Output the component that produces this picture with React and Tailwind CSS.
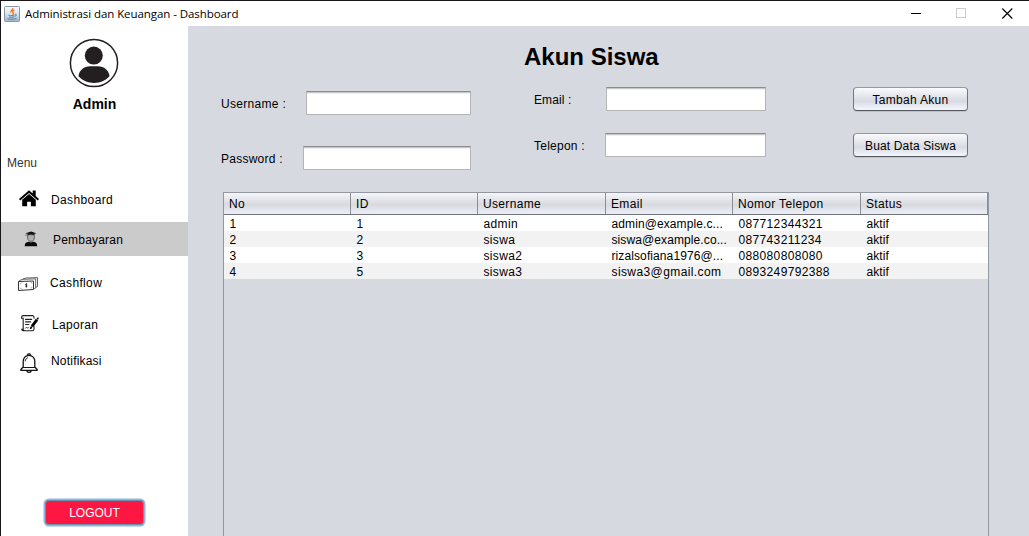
const COLUMNS = ['No', 'ID', 'Username', 'Email', 'Nomor Telepon', 'Status'];

const ROWS = [
  ['1', '1', 'admin', 'admin@example.c...', '087712344321', 'aktif'],
  ['2', '2', 'siswa', 'siswa@example.co...', '087743211234', 'aktif'],
  ['3', '3', 'siswa2', 'rizalsofiana1976@...', '088080808080', 'aktif'],
  ['4', '5', 'siswa3', 'siswa3@gmail.com', '0893249792388', 'aktif'],
];

function JavaIcon() {
  return (
    <svg width="16" height="16" viewBox="0 0 16 16" fill="none">
      <defs>
        <linearGradient id="java-bg" x1="0" y1="0" x2="0" y2="1">
          <stop offset="0" stopColor="#fafbfc" />
          <stop offset="0.55" stopColor="#d5e0ea" />
          <stop offset="1" stopColor="#9cb4c8" />
        </linearGradient>
      </defs>
      <rect x="0.5" y="0.5" width="15" height="15" rx="1" fill="url(#java-bg)" stroke="#8796a5" />
      <path d="M8.800 2c.8 1.600-2.800 2.600-1.800 4.600M10.300 4c-1.600.8-2 1.500-1.300 2.500s.3 1.500-.5 2" stroke="#e8802c" strokeWidth="1.400" />
      <path d="M4.500 9c-.8.700 4.500.8 6 0M5.200 10.800c0 .6 4 .6 5 0M11 8.300c2-.4 1.800 1.500-.2 2" stroke="#45749c" strokeWidth="0.900" />
      <path d="M3.700 12.200c-.6.800 1.800 1 4.300 1s5-.5 4-1.300" stroke="#45749c" strokeWidth="0.900" />
    </svg>
  );
}

function Avatar() {
  return (
    <svg width="50" height="50" viewBox="0 0 50 50">
      <circle cx="25" cy="25" r="23.600" fill="#fff" stroke="#231f20" strokeWidth="1.500" />
      <circle cx="24.800" cy="17.600" r="9" fill="#231f20" />
      <path d="M9.500 38.300C10.200 32 15 28.200 21 28.200h8c6 0 10.800 3.800 11.500 10.100C36.500 42.800 31 45 25 45s-11.500-2.200-15.500-6.700z" fill="#231f20" />
    </svg>
  );
}

function HouseIcon() {
  return (
    <svg width="20" height="17" viewBox="0 0 20 17" fill="#000">
      <path d="M10 .3 0 9l1.200 1.500L10 3l8.800 7.500L20 9l-3.300-2.900V.5h-3v3z" />
      <path d="M10 3.900 3.200 9.800v6.500h4.900v-4.500h3.800v4.500h4.900V9.800z" />
    </svg>
  );
}

function GraduateIcon() {
  return (
    <svg width="14" height="16" viewBox="0 0 14 16">
      <path d="M7 .6 1.500 2.200 7 3.600l5.500-1.400z" fill="#111" />
      <path d="M3.300 2.500v2.200c2.200-.6 5.200-.6 7.400 0V2.500L7 3.500z" fill="#222" />
      <path d="M3.700 4.900v2.200c0 2 1.500 3.300 3.300 3.300s3.300-1.300 3.300-3.300V4.900" fill="#b0b0b0" stroke="#555" strokeWidth="0.900" />
      <path d="M2.100 2.300v3" stroke="#444" strokeWidth="0.600" />
      <path d="M.8 15.300c0-3.200 1.200-4 4-4.600L7 11.500l2.200-.8c2.800.6 4 1.400 4 4.600z" fill="#0a0a0a" />
    </svg>
  );
}

function CashIcon() {
  return (
    <svg width="20" height="15" viewBox="0 0 20 15" fill="none" stroke="#333" strokeWidth="1">
      <path d="M.5 4.500 15.500 4v8.500L.5 13.500z" />
      <path d="M1.200 3.600 5 2.300l12.700-.5v9.200l-2 1M5 1.900 8 1l11.500-.4v8.900l-1.800.9" stroke="#555" strokeWidth="0.900" />
      <path d="M2.300 7.300V6l1.500-.1M2.300 10.600v1.300l1.500-.1M13.900 6.600V5.500l-1.400.1M13.900 9.800v1.100l-1.400.1" stroke="#999" strokeWidth="0.700" />
      <path d="M9.200 7.300c-.4-.5-1.700-.4-1.700.3 0 .9 1.700.5 1.700 1.400 0 .8-1.300.9-1.800.3M8.400 6.500v4" stroke="#222" strokeWidth="0.900" />
    </svg>
  );
}

function ReportIcon() {
  return (
    <svg width="18" height="17" viewBox="0 0 18 17" fill="none" stroke="#222" strokeLinecap="round">
      <path d="M13 3.300V2.200c0-1-.6-1.600-1.600-1.600H2.200C1 .6.600 1.300.600 2.300v.9h1.600v10.900c0 1.200.6 1.700 1.600 1.700h7.600c1 0 1.600-.6 1.600-1.600v-2.700M3.800 15.800c-2 0-3.100-.1-3.100-1.600h1.500" strokeWidth="1.100" />
      <path d="M4.600 4.400h6M4.600 6.900h5M4.600 9.500h3.200" strokeWidth="1.200" />
      <path d="m4.500 13.200 1-1 .8.900 1.200-.4" strokeWidth="0.800" />
      <path d="m16 4.600-5 6.800" stroke="#000" strokeWidth="2.900" strokeLinecap="butt" />
      <path d="m16.800 3.400-.1.200M10.300 12.200l-.5.900" stroke="#000" strokeWidth="1.800" />
    </svg>
  );
}

function BellIcon() {
  return (
    <svg width="18" height="20" viewBox="0 0 18 20" fill="none" stroke="#151515" strokeWidth="1.300">
      <path d="M3.200 14V8.500C3.200 5 5.500 2.400 9 2.400s5.800 2.600 5.800 6.100V14l2.300 2.500c.3.500.1.900-.4.900H1.300c-.5 0-.7-.4-.4-.9z" />
      <path d="M3 14.500h12" strokeWidth="1" />
      <path d="M7.600 2.300V1.600C7.800.5 10.200.5 10.400 1.600v.7M6.700 17.600c.3 2.300 4.300 2.300 4.600 0" />
      <path d="M5.200 8.400c.1-2 1.200-3.300 2.700-3.800" strokeWidth="0.900" />
    </svg>
  );
}

function Field({ label, labelClass, inputClass }) {
  return (
    <label className="flex h-6 items-center justify-between">
      <span className={`pt-0.5 leading-4 whitespace-nowrap ${labelClass}`}>{label}</span>
      <input
        className={`h-6 border border-[#b5b5b8] border-t-[#8b8c91] bg-white shadow-[inset_0_1px_0_#c8c8cb,inset_0_2px_0_#f0f0f1] outline-none ${inputClass}`}
      />
    </label>
  );
}

function ActionButton({ children, textClass }) {
  return (
    <button className="h-6 w-[115px] rounded-[4px] border border-[#73767d] border-t-[#95989f] border-b-[#54575e] bg-linear-to-b from-[#fafafc] via-[#d7dae2] via-60% to-[#f5f7ff] pt-px leading-4 shadow-[0_1px_0_#bfc3cb]">
      <span className={textClass}>{children}</span>
    </button>
  );
}

function MenuItem({ icon, label, className, iconClass, textClass }) {
  return (
    <div className={`flex items-start ${className}`}>
      <span className={`shrink-0 ${iconClass}`}>{icon}</span>
      <span className={`leading-4 ${textClass}`}>{label}</span>
    </div>
  );
}

function Sidebar() {
  return (
    <aside className="flex w-[187px] shrink-0 flex-col bg-white">
      <div className="flex flex-col items-center pt-3">
        <span className="mr-[2px]">
          <Avatar />
        </span>
        <span className="mt-[7px] text-sm leading-[18px] font-bold">Admin</span>
      </div>
      <div className="mt-[42px] pl-1.5 leading-4 text-[#333]">Menu</div>
      <nav className="flex flex-col">
        <MenuItem icon={<HouseIcon />} label="Dashboard" className="mt-[11px] h-10 pt-2 pl-[18px]" iconClass="w-8" textClass="pt-0.5 tracking-[0.38px]" />
        <MenuItem icon={<GraduateIcon />} label="Pembayaran" className="h-[34px] bg-[#cbcbcb] pt-[9px] pl-[23px]" iconClass="w-[29px]" textClass="pt-px tracking-[0.2px]" />
        <MenuItem icon={<CashIcon />} label="Cashflow" className="h-[42px] pt-[19px] pl-[17px]" iconClass="mt-0.5 w-8" textClass="tracking-[0.35px]" />
        <MenuItem icon={<ReportIcon />} label="Laporan" className="h-10 pt-[17px] pl-5" iconClass="w-[31px]" textClass="pt-0.5 tracking-[0.3px]" />
        <MenuItem icon={<BellIcon />} label="Notifikasi" className="h-10 pt-[15px] pl-[19px]" iconClass="w-[31px]" textClass="tracking-[0.2px]" />
      </nav>
      <button className="mt-auto mb-[12px] ml-[45px] h-[23px] w-[97px] rounded-[3px] bg-[#ff1744] pt-px leading-4 text-white shadow-[0_0_0_1px_#6f8fae,0_0_0_2.500px_#8cb8dc]">
        LOGOUT
      </button>
    </aside>
  );
}

function cellTracking(column, text) {
  if (column === 5) return 'tracking-[0.1px]';
  if (column === 3) return text.endsWith('...') ? 'tracking-[0.1px]' : 'tracking-[0.4px]';
  return 'tracking-[0.35px]';
}

function AccountTable() {
  return (
    <div className="mt-[22px] ml-[35px] flex w-[766px] grow flex-col border-x border-t border-[#9297a1]">
      <div className="grid h-[22px] shrink-0 grid-cols-[127px_127px_128px_127px_128px_127px] border-b border-[#6f737b] bg-linear-to-b from-[#f5f6f9] via-[#d8dae0] via-55% to-[#eceff7]">
        {COLUMNS.map((name) => (
          <div key={name} className="border-r border-[#8b8e96] pt-[3px] pl-[5px] leading-4 tracking-[0.33px]">
            {name}
          </div>
        ))}
      </div>
      {ROWS.map((row, i) => (
        <div key={row[0]} className={`grid h-4 grid-cols-[127px_127px_128px_127px_128px_127px] ${i % 2 ? 'bg-[#f2f2f2]' : 'bg-white'}`}>
          {row.map((cell, j) => (
            <div key={COLUMNS[j]} className={`overflow-hidden pt-px pl-[5.5px] leading-4 whitespace-nowrap ${cellTracking(j, cell)}`}>
              {cell}
            </div>
          ))}
        </div>
      ))}
    </div>
  );
}

export default function App() {
  return (
    <div className="flex h-[536px] w-[1029px] flex-col overflow-hidden border-t border-l border-[#19151a] bg-[#d6d9e0] font-['Liberation_Sans',Arial,sans-serif] text-xs text-black">
      <header className="flex h-[25px] shrink-0 items-center bg-white">
        <span className="ml-[3px]">
          <JavaIcon />
        </span>
        <span className="ml-[5px] font-['Open_Sans','Noto_Sans',sans-serif] text-[11.5px] leading-4 tracking-[-0.07px] whitespace-nowrap">
          Administrasi dan Keuangan - Dashboard
        </span>
        <svg className="mr-4 ml-auto" width="102" height="11" viewBox="0 0 102 11" fill="none">
          <path d="M0 5.500h10" stroke="#000" />
          <rect x="45.500" y="0.500" width="9" height="9" stroke="#ccc" />
          <path d="m91.300.5 10 10m0-10-10 10" stroke="#000" strokeWidth="1.100" />
        </svg>
      </header>
      <div className="flex min-h-0 grow">
        <Sidebar />
        <main className="flex grow flex-col">
          <h1 className="mt-4 ml-[336px] h-[30px] text-2xl leading-[30px] font-bold">Akun Siswa</h1>
          <div className="ml-[33px] flex h-[98px] pt-[15px]">
            <div className="flex w-[250px] flex-col gap-[31px] pt-1">
              <Field label="Username :" labelClass="tracking-[0.3px]" inputClass="w-[165px]" />
              <Field label="Password :" labelClass="tracking-[0.25px]" inputClass="w-[168px]" />
            </div>
            <div className="ml-[63px] flex w-[232px] flex-col gap-[22px]">
              <Field label="Email :" labelClass="tracking-[0.1px]" inputClass="w-[160px]" />
              <Field label="Telepon :" labelClass="tracking-[0.25px]" inputClass="w-[161px]" />
            </div>
            <div className="ml-[87px] flex flex-col gap-[22px]">
              <ActionButton textClass="tracking-[0.3px]">Tambah Akun</ActionButton>
              <ActionButton textClass="tracking-[0.15px]">Buat Data Siswa</ActionButton>
            </div>
          </div>
          <AccountTable />
        </main>
      </div>
    </div>
  );
}
